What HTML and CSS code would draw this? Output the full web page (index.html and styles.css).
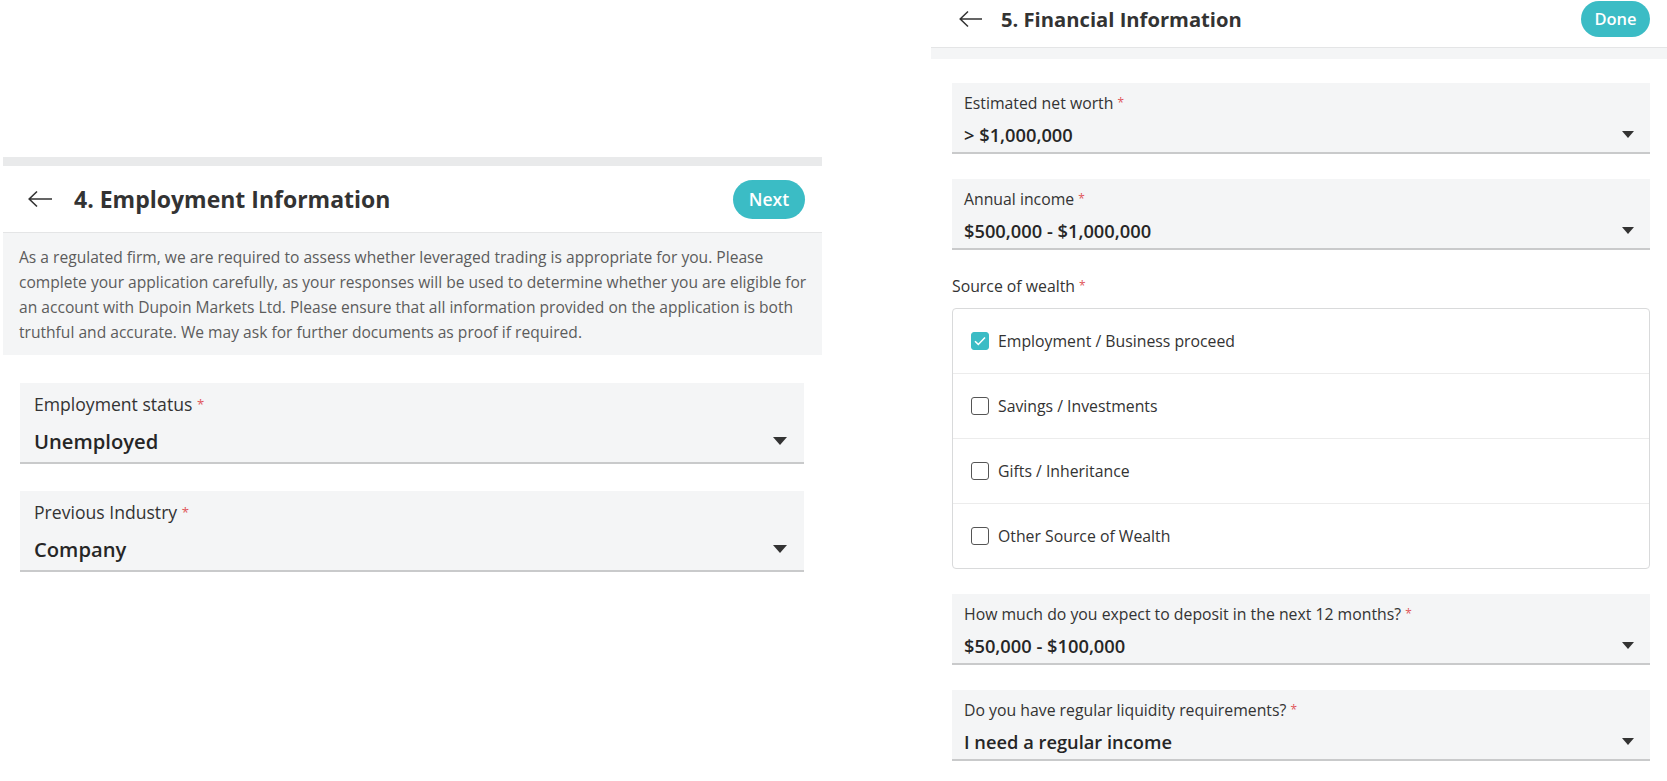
FILE: index.html
```html
<!DOCTYPE html>
<html lang="en">
<head>
    <meta charset="UTF-8">
    <meta name="viewport" content="width=device-width, initial-scale=1.0">
    <title>Account Application</title>
    <link rel="stylesheet" href="styles.css">
</head>
<body>
    <div class="panel panel-left">
        <div class="topbar"></div>
        <div class="header">
            <span class="back">
                <svg width="26" height="18" viewBox="0 0 26 18"><path d="M25 9H2M10 1.5L2.2 9 10 16.5" fill="none" stroke="#333" stroke-width="1.6"/></svg>
            </span>
            <h1>4. Employment Information</h1>
            <button class="pill-button">Next</button>
        </div>
        <div class="notice">
            As a regulated firm, we are required to assess whether leveraged trading is appropriate for you. Please complete your application carefully, as your responses will be used to determine whether you are eligible for an account with Dupoin Markets Ltd. Please ensure that all information provided on the application is both truthful and accurate. We may ask for further documents as proof if required.
        </div>
        <div class="fields">
            <div class="select-field">
                <div class="select-label">Employment status <span class="req">*</span></div>
                <div class="select-value">Unemployed <span class="caret"></span></div>
            </div>
            <div class="select-field">
                <div class="select-label">Previous Industry <span class="req">*</span></div>
                <div class="select-value">Company <span class="caret"></span></div>
            </div>
        </div>
    </div>

    <div class="panel panel-right">
        <div class="header">
            <span class="back">
                <svg width="25" height="18" viewBox="0 0 25 18"><path d="M24 9H2M10 1.5L2.2 9 10 16.5" fill="none" stroke="#333" stroke-width="1.5"/></svg>
            </span>
            <h1>5. Financial Information</h1>
            <button class="pill-button">Done</button>
        </div>
        <div class="strip"></div>
        <div class="fields">
            <div class="select-field">
                <div class="select-label">Estimated net worth <span class="req">*</span></div>
                <div class="select-value">&gt; $1,000,000 <span class="caret"></span></div>
            </div>
            <div class="select-field">
                <div class="select-label">Annual income <span class="req">*</span></div>
                <div class="select-value">$500,000 - $1,000,000 <span class="caret"></span></div>
            </div>
            <div class="group">
                <div class="group-label">Source of wealth <span class="req">*</span></div>
                <div class="check-list">
                    <label class="check-row">
                        <span class="box checked">
                            <svg width="12" height="10" viewBox="0 0 12 10"><path d="M1 5.2L4.3 8.4 11 1.4" fill="none" stroke="#fff" stroke-width="1.5"/></svg>
                        </span>
                        Employment / Business proceed
                    </label>
                    <label class="check-row"><span class="box"></span>Savings / Investments</label>
                    <label class="check-row"><span class="box"></span>Gifts / Inheritance</label>
                    <label class="check-row"><span class="box"></span>Other Source of Wealth</label>
                </div>
            </div>
            <div class="select-field">
                <div class="select-label">How much do you expect to deposit in the next 12 months? <span class="req">*</span></div>
                <div class="select-value">$50,000 - $100,000 <span class="caret"></span></div>
            </div>
            <div class="select-field">
                <div class="select-label">Do you have regular liquidity requirements? <span class="req">*</span></div>
                <div class="select-value">I need a regular income <span class="caret"></span></div>
            </div>
        </div>
    </div>
</body>
</html>
```

FILE: styles.css
```css
body {
    font-family: "Open Sans", "Noto Sans", Arial, sans-serif;
    background-color: #fff;
    color: #333;
    margin: 0;
    display: flex;
    align-items: flex-start;
}
.panel {
    box-sizing: border-box;
}
.panel-left {
    width: 819px;
    margin: 157px 0 0 3px;
}
.panel-right {
    width: 736px;
    margin-left: 109px;
}
.topbar {
    height: 9px;
    background-color: #e9eaeb;
}
.header {
    display: flex;
    align-items: center;
    border-bottom: 1px solid #e4e5e6;
}
.panel-left .header {
    height: 66px;
    padding: 0 17px 0 24px;
}
.panel-right .header {
    height: 37px;
    padding: 0 17px 10px 27px;
}
.back {
    display: flex;
    align-items: center;
}
h1 {
    flex: 1;
    margin: 0;
    font-weight: 700;
    color: #333;
}
.panel-left h1 {
    font-size: 23px;
    margin-left: 21px;
}
.panel-right h1 {
    font-size: 20.2px;
    margin-left: 18px;
}
.pill-button {
    font-family: inherit;
    font-weight: 600;
    background-color: #3bbcc5;
    color: #fff;
    border: none;
    border-radius: 20px;
    cursor: pointer;
}
.panel-left .pill-button {
    width: 72px;
    height: 39px;
    font-size: 17.5px;
}
.panel-right .pill-button {
    width: 69px;
    height: 36px;
    font-size: 16.5px;
}
.strip {
    height: 11px;
    background-color: #f4f5f6;
}
.notice {
    background-color: #f4f5f6;
    color: #5c5c5c;
    font-size: 15.6px;
    line-height: 25px;
    padding: 12px 2px 10px 16px;
}
.panel-left .fields {
    padding: 28px 18px 0 17px;
    display: flex;
    flex-direction: column;
    gap: 27px;
}
.panel-right .fields {
    padding: 24px 17px 0 21px;
    display: flex;
    flex-direction: column;
    gap: 25px;
}
.select-field {
    background-color: #f4f5f6;
    border-bottom: 2px solid #c9cacb;
}
.panel-left .select-field {
    padding: 9px 17px 6px 14px;
}
.panel-right .select-field {
    padding: 8px 16px 5px 12px;
}
.select-label {
    color: #333;
}
.panel-left .select-label {
    font-size: 17.6px;
    line-height: 24px;
}
.panel-right .select-label {
    font-size: 15.8px;
    line-height: 22px;
}
.req {
    color: #e0555a;
    font-size: 0.75em;
    vertical-align: 2px;
}
.select-value {
    display: flex;
    justify-content: space-between;
    align-items: center;
    font-weight: 600;
    color: #262626;
}
.panel-left .select-value {
    font-size: 20.2px;
    line-height: 30px;
    margin-top: 10px;
}
.panel-right .select-value {
    font-size: 18.3px;
    line-height: 25px;
    margin-top: 8px;
}
.caret {
    width: 0;
    height: 0;
    border-top: 8px solid #333;
    border-left: 7px solid transparent;
    border-right: 7px solid transparent;
}
.panel-right .caret {
    border-top-width: 7px;
    border-left-width: 6.5px;
    border-right-width: 6.5px;
}
.group-label {
    font-size: 15.8px;
    line-height: 22px;
    margin-bottom: 11px;
}
.group {
    margin-top: -1px;
}
.check-list {
    border: 1px solid #d9dadb;
    border-radius: 4px;
}
.check-row {
    display: flex;
    align-items: center;
    gap: 9px;
    height: 64px;
    padding-left: 18px;
    font-size: 15.8px;
    color: #333;
    border-top: 1px solid #ececec;
}
.check-row:first-child {
    border-top: none;
}
.box {
    width: 16px;
    height: 16px;
    border: 1.5px solid #555;
    border-radius: 3px;
    display: flex;
    align-items: center;
    justify-content: center;
}
.box.checked {
    background-color: #3bbcc5;
    border-color: #3bbcc5;
}
```
